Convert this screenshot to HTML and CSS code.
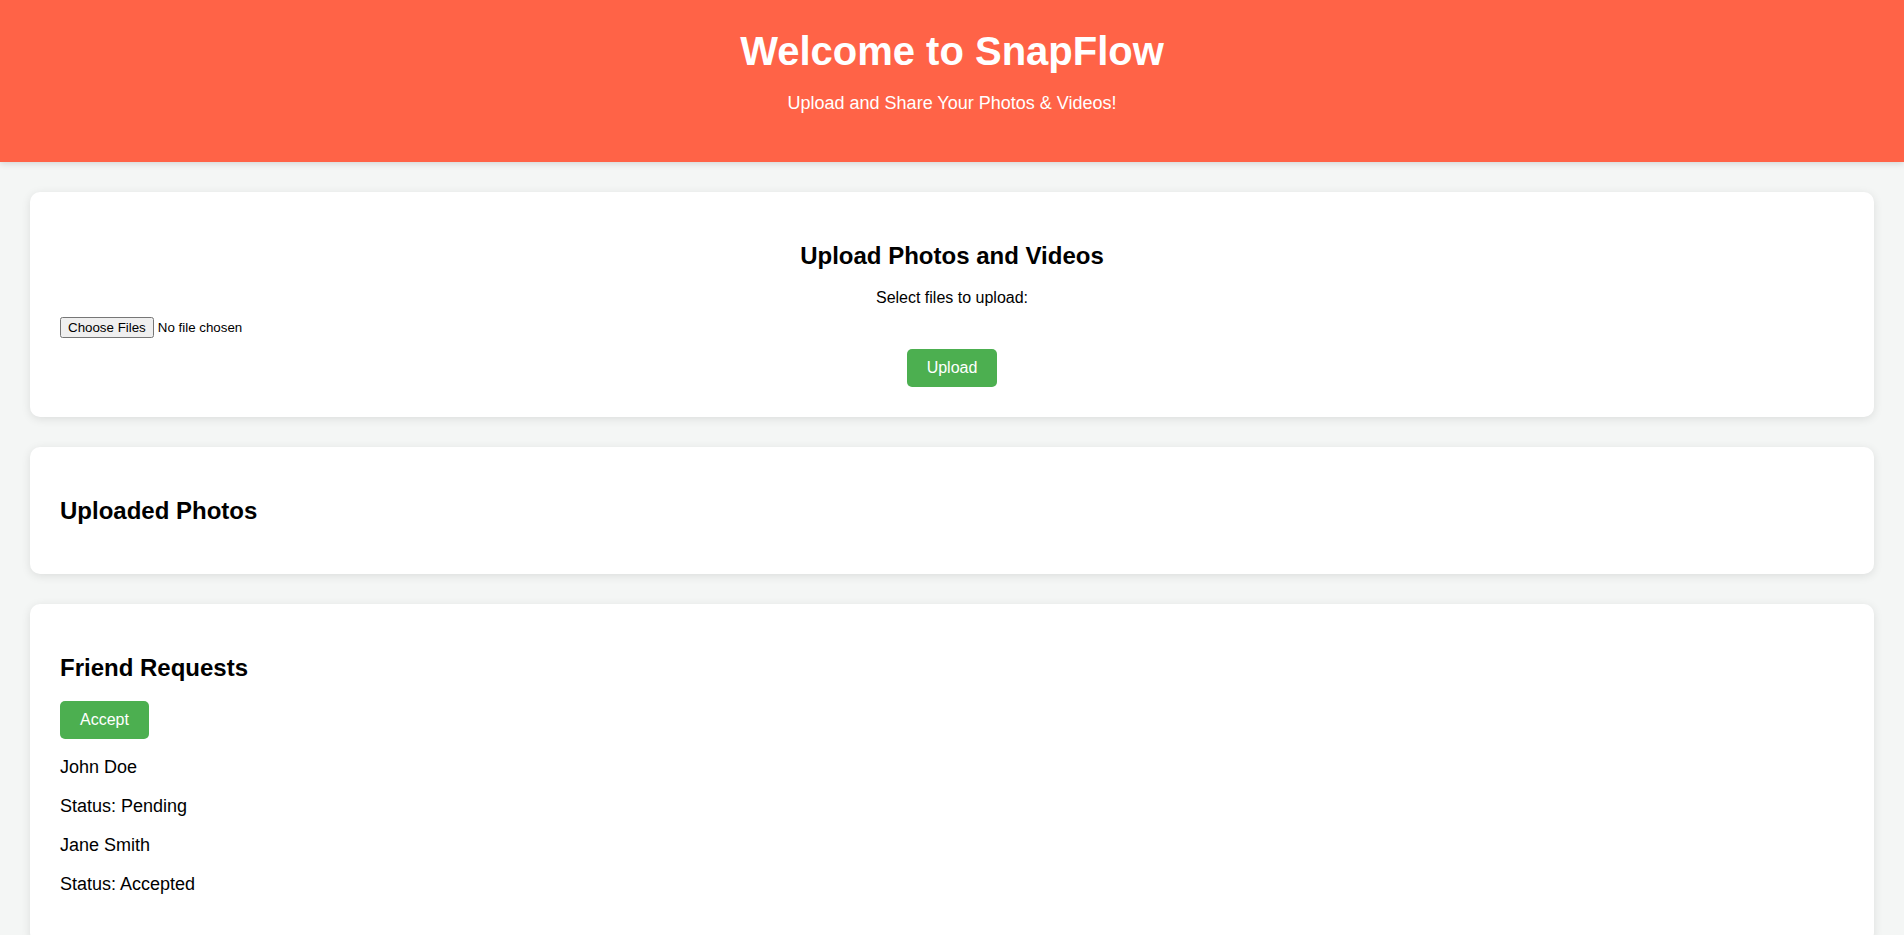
FILE: index.html
```html
<!DOCTYPE html>
<html lang="en">
<head>
<meta charset="UTF-8">
<title>SnapFlow</title>
<link rel="stylesheet" href="styles.css">
</head>
<body>
<header class="site-header">
  <h1 class="site-title">Welcome to SnapFlow</h1>
  <p class="site-subtitle">Upload and Share Your Photos &amp; Videos!</p>
</header>
<main class="main">
  <section class="card upload-card">
    <h2 class="card-title">Upload Photos and Videos</h2>
    <form class="upload-form">
      <label class="upload-label" for="files">Select files to upload:</label>
      <input class="file-input" type="file" id="files" multiple>
      <button type="button" class="btn">Upload</button>
    </form>
  </section>
  <section class="card">
    <h2 class="card-title">Uploaded Photos</h2>
  </section>
  <section class="card">
    <h2 class="card-title">Friend Requests</h2>
    <button type="button" class="btn">Accept</button>
    <p class="friend-line">John Doe</p>
    <p class="friend-line">Status: Pending</p>
    <p class="friend-line">Jane Smith</p>
    <p class="friend-line">Status: Accepted</p>
  </section>
</main>
</body>
</html>
```
FILE: styles.css
```css
html, body {
  margin: 0;
  padding: 0;
}
body {
  font-family: "Liberation Sans", Arial, sans-serif;
  background: #f4f6f5;
  color: #000;
}
.site-header {
  background: #ff6347;
  color: #fff;
  text-align: center;
  padding: 29px 20px 48px;
  box-shadow: 0 2px 6px rgba(0, 0, 0, 0.12);
  position: relative;
}
.site-title {
  font-size: 40px;
  font-weight: bold;
  margin: 0 0 19px;
}
.site-subtitle {
  font-size: 18px;
  margin: 0;
}
.main {
  padding: 30px;
  display: flex;
  flex-direction: column;
  gap: 30px;
}
.card {
  background: #fff;
  border-radius: 10px;
  padding: 30px;
  box-shadow: 0 2px 10px rgba(0, 0, 0, 0.1);
}
.card-title {
  font-size: 24px;
  font-weight: bold;
  margin: 19.5px 0;
}
.upload-card {
  text-align: center;
}
.upload-form {
  margin: 0;
}
.upload-label {
  display: block;
  font-size: 16px;
}
.file-input {
  display: block;
  margin: 10px 0 11px;
  font-family: "Liberation Sans", Arial, sans-serif;
  font-size: 13.33px;
}
.btn {
  background: #4caf50;
  color: #fff;
  border: none;
  border-radius: 5px;
  padding: 10px 20px;
  font-family: "Liberation Sans", Arial, sans-serif;
  font-size: 16px;
  line-height: normal;
  cursor: pointer;
  vertical-align: top;
}
.friend-line {
  font-size: 18px;
  margin: 18px 0;
}
```
